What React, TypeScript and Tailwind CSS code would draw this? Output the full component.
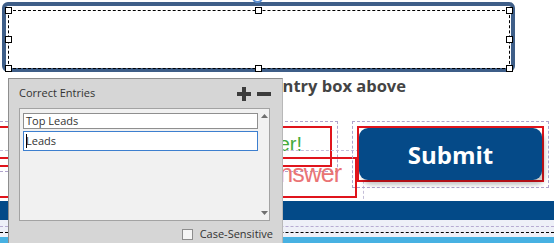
import React from 'react';

const Handle: React.FC<{ className: string }> = ({ className }) => (
  <div className={`absolute w-[7px] h-[7px] bg-white border border-black ${className}`} />
);

const CorrectEntriesPanel: React.FC = () => {
  return (
    <div className="absolute left-[8px] top-[78px] w-[275px] h-[175px] bg-[#d6d6d6] border border-[#8e8e8e] border-r-[#b8b8b8] flex flex-col font-['Open_Sans',sans-serif] text-[#333]">
      <div className="h-[29px] shrink-0 flex items-center justify-between pl-[10px] pr-[11px]">
        <span className="text-[11px]">Correct Entries</span>
        <div className="flex items-center gap-[6px]">
          <svg width="14" height="14" viewBox="0 0 14 14">
            <rect x="5" y="0" width="4" height="14" fill="#3c3c3c" />
            <rect x="0" y="5" width="14" height="4" fill="#3c3c3c" />
          </svg>
          <svg width="14" height="14" viewBox="0 0 14 14">
            <rect x="0" y="5" width="14" height="4" fill="#3c3c3c" />
          </svg>
        </div>
      </div>

      {/* entries list */}
      <div className="ml-[10px] w-[251px] h-[113px] shrink-0 border border-[#a3a3a3] bg-[#f1f1f1] flex">
        <div className="w-[239px] pl-[3px] pt-[4px] flex flex-col gap-[2px]">
          <div className="w-[235px] h-[16px] bg-white border border-[#8f8f8f] pl-[2px] text-[11px] leading-[14px]">
            Top Leads
          </div>
          <div className="relative w-[235px] h-[20px] bg-white border border-[#3d7fcf] pl-[2px] text-[11px] leading-[18px]">
            Leads
            <div className="absolute left-[2px] top-[2px] w-px h-[14px] bg-black" />
          </div>
        </div>
        <div className="flex-1 flex flex-col items-center justify-between py-[5px]">
          <svg width="7" height="4" viewBox="0 0 7 4">
            <path d="M0 4 L3.5 0 L7 4 Z" fill="#6f6f6f" />
          </svg>
          <svg width="7" height="4" viewBox="0 0 7 4">
            <path d="M0 0 L3.5 4 L7 0 Z" fill="#6f6f6f" />
          </svg>
        </div>
      </div>

      <div className="h-[27px] shrink-0 flex items-center justify-end gap-[7px] pr-[9px]">
        <div className="w-[11px] h-[11px] border border-[#8d8d8d] bg-[#f5f5f5]" />
        <span className="text-[11px]">Case-Sensitive</span>
      </div>
    </div>
  );
};

export default function App() {
  return (
    <div className="relative w-[554px] h-[243px] overflow-hidden bg-white flex flex-col font-['Open_Sans',sans-serif]">
      {/* text entry box */}
      <div className="relative ml-[2px] mt-[2px] w-[513px] h-[70px] shrink-0 border-4 border-[#3e5e88] rounded-[6px]">
        <div className="absolute left-[2px] top-[4px] w-[502px] h-[59px] border border-dashed border-black">
          <Handle className="-left-[4px] -top-[4px]" />
          <Handle className="left-[246px] -top-[4px]" />
          <Handle className="left-[497px] -top-[4px]" />
          <Handle className="-left-[4px] top-[25px]" />
          <Handle className="left-[497px] top-[25px]" />
          <Handle className="-left-[4px] top-[54px]" />
          <Handle className="left-[246px] top-[54px]" />
          <Handle className="left-[497px] top-[54px]" />
        </div>
      </div>
      <div className="absolute left-[252px] -top-[8px] w-[11px] h-[11px] rounded-full border-2 border-[#5b8fd0]" />

      {/* instruction */}
      <div className="mt-[4px] h-[20px] w-[406px] shrink-0 text-right text-[16.5px] leading-[20px] font-bold text-[#444] whitespace-nowrap">
        Type your answer in the entry box above
      </div>

      {/* feedback captions and submit button */}
      <div className="mt-[25px] h-[80px] shrink-0 flex font-['Liberation_Sans',Arial,sans-serif]">
        <div className="-ml-[10px] w-[367px] shrink-0 flex flex-col">
          <div className="w-[348px] h-[51px] shrink-0 border border-dashed border-[#b0a4cc] pt-[4px]">
            <div className="w-[341px] h-[41px] border-2 border-[#e0141c] flex items-center justify-end pr-[28px] pb-[5px] whitespace-nowrap text-[20px] leading-[20px] text-[#45ab3a]">
              Correct! That is the right answer!
            </div>
          </div>
          <div className="-mt-[22px] w-[374px] h-[54px] shrink-0 border border-dashed border-[#c4bed8] pt-[6px]">
            <div className="w-[366px] h-[41px] border-2 border-[#e0141c] flex items-center justify-end pr-[14px] pb-[8px] whitespace-nowrap text-[25px] leading-[25px] tracking-[-1px] text-[#ea7474]">
              Sorry, that's not the right answer
            </div>
          </div>
        </div>
        <div className="-ml-[5px] w-[197px] h-[67px] shrink-0 border border-dashed border-[#b0a4cc] pl-[4px] pt-[4px]">
          <div className="w-[187px] h-[56px] border-2 border-[#e0141c]">
            <div className="w-full h-full rounded-[9px] bg-[#054a88] shadow-[3px_5px_4px_rgba(0,0,0,0.22)] flex items-center justify-center pt-[2px] font-['Open_Sans',sans-serif] font-bold text-[24px] leading-[28px] text-white">
              Submit
            </div>
          </div>
        </div>
      </div>

      {/* bottom bars */}
      <div className="h-[19px] shrink-0 bg-[#034a88]" />
      <div className="h-[17px] shrink-0 bg-[#eef0f8] flex flex-col">
        <div className="mt-[6px] border-t border-dashed border-[#b7abd2]" />
        <div className="mt-[5px] border-t border-dashed border-black" />
      </div>
      <div className="h-[6px] shrink-0 bg-[#47b1e2]" />

      <CorrectEntriesPanel />
    </div>
  );
}
